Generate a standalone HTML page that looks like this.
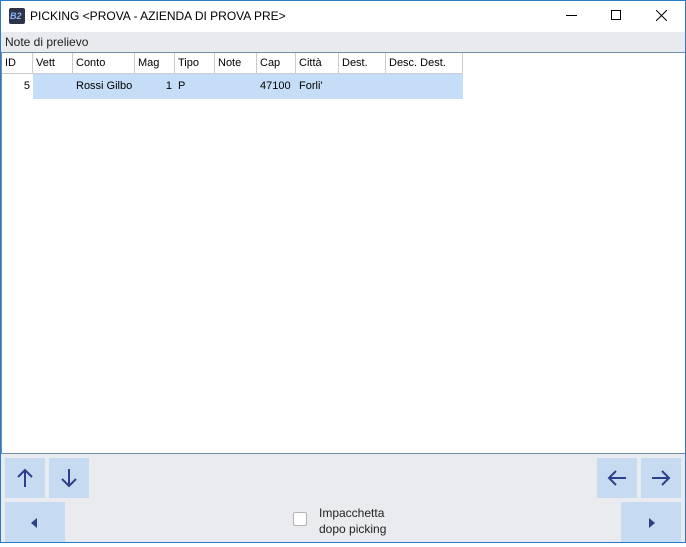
<!DOCTYPE html>
<html><head><style>
*{margin:0;padding:0;box-sizing:border-box}
body{width:686px;height:543px;overflow:hidden;background:#fff;font-family:"Liberation Sans",sans-serif;position:relative}
.win{position:absolute;left:0;top:0;width:686px;height:543px;border:1px solid #2b79c9}
.a{position:absolute;white-space:nowrap}
.title{left:30px;top:9px;font-size:12px;color:#000}
.lbl{left:1px;top:32px;width:684px;height:20px;background:#e9eaee;font-size:12px;color:#222;padding:3px 0 0 4px}
.grid{left:1px;top:52px;width:684px;height:402px;border-top:1px solid #6f8fb0;border-bottom:1px solid #6f8fb0;border-left:1px solid #6f8fb0;background:#fff}
.h{position:absolute;top:0;height:21px;border-right:1px solid #c9cdd3;border-bottom:1px solid #c9cdd3;font-size:11px;padding:4px 0 0 3px;color:#000;white-space:nowrap}
.c{position:absolute;top:21px;height:25px;background:#c5ddf6;font-size:11px;padding:6px 3px 0 3px;white-space:nowrap}
.bp{left:1px;top:454px;width:684px;height:88px;background:#eaebef}
.btn{position:absolute;background:#c6daf1}
</style></head><body>
<div class="win"></div>
<div class="a" style="left:9px;top:8px;width:16px;height:16px;background:#2e3348;border-radius:2px;color:#8ab4ff;font-size:9px;font-style:italic;font-weight:bold;padding:3px 0 0 1px">B2</div>
<div class="a title">PICKING &lt;PROVA - AZIENDA DI PROVA PRE&gt;</div>
<div class="a" style="left:566px;top:15px;width:11px;height:1px;background:#000"></div>
<div class="a" style="left:611px;top:10px;width:10px;height:10px;border:1px solid #000"></div>
<svg class="a" style="left:656px;top:10px" width="11" height="11"><path d="M0 0L11 11M11 0L0 11" stroke="#000" stroke-width="1"/></svg>
<div class="a lbl">Note di prelievo</div>
<div class="a grid">
<div class="h" style="left:0;width:31px">ID</div>
<div class="h" style="left:31px;width:40px">Vett</div>
<div class="h" style="left:71px;width:62px">Conto</div>
<div class="h" style="left:133px;width:40px">Mag</div>
<div class="h" style="left:173px;width:40px">Tipo</div>
<div class="h" style="left:213px;width:42px">Note</div>
<div class="h" style="left:255px;width:39px">Cap</div>
<div class="h" style="left:294px;width:43px">Città</div>
<div class="h" style="left:337px;width:47px">Dest.</div>
<div class="h" style="left:384px;width:77px">Desc. Dest.</div>
<div class="c" style="left:0;width:31px;background:#fff;text-align:right">5</div>
<div class="c" style="left:31px;width:430px"></div>
<div class="c" style="left:71px;width:62px;background:none">Rossi Gilbo</div>
<div class="c" style="left:133px;width:40px;background:none;text-align:right">1</div>
<div class="c" style="left:173px;width:40px;background:none">P</div>
<div class="c" style="left:255px;width:39px;background:none">47100</div>
<div class="c" style="left:294px;width:43px;background:none">Forli'</div>
</div>
<div class="a bp"></div>
<div class="btn" style="left:5px;top:458px;width:40px;height:40px"><svg width="40" height="40"><path d="M20 29V12M13 19L20 12L27 19" stroke="#2c3f8a" stroke-width="2" fill="none"/></svg></div>
<div class="btn" style="left:49px;top:458px;width:40px;height:40px"><svg width="40" height="40"><path d="M20 11V28M13 21L20 28L27 21" stroke="#2c3f8a" stroke-width="2" fill="none"/></svg></div>
<div class="btn" style="left:597px;top:458px;width:40px;height:40px"><svg width="40" height="40"><path d="M29 20H12M19 13L12 20L19 27" stroke="#2c3f8a" stroke-width="2" fill="none"/></svg></div>
<div class="btn" style="left:641px;top:458px;width:40px;height:40px"><svg width="40" height="40"><path d="M11 20H28M21 13L28 20L21 27" stroke="#2c3f8a" stroke-width="2" fill="none"/></svg></div>
<div class="btn" style="left:5px;top:502px;width:60px;height:40px"><svg width="60" height="40"><path d="M32 16V26L26 21Z" fill="#2c3f8a"/></svg></div>
<div class="btn" style="left:621px;top:502px;width:60px;height:40px"><svg width="60" height="40"><path d="M28 16V26L34 21Z" fill="#2c3f8a"/></svg></div>
<div class="a" style="left:293px;top:512px;width:14px;height:14px;border:1px solid #b5b5b5;background:#fff;border-radius:2px"></div>
<div class="a" style="left:319px;top:505px;font-size:12px;line-height:16px;color:#222">Impacchetta<br>dopo picking</div>
</body></html>
